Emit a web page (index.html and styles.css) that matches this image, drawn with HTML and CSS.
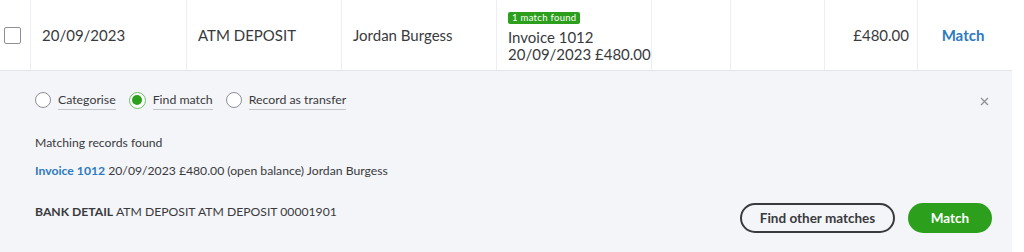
FILE: index.html
```html
<!DOCTYPE html>
<html lang="en">
<head>
<meta charset="utf-8">
<title>Bank transaction match</title>
<link rel="stylesheet" href="styles.css">
</head>
<body>
<div class="wrap">
  <div class="row">
    <div class="cell cell-check"><span class="checkbox"></span></div>
    <div class="cell">20/09/2023</div>
    <div class="cell">ATM DEPOSIT</div>
    <div class="cell">Jordan Burgess</div>
    <div class="cell cell-match">
      <span class="badge">1 match found</span>
      <div class="match-line">Invoice 1012</div>
      <div class="match-line">20/09/2023 £480.00 (open balance)</div>
    </div>
    <div class="cell"></div>
    <div class="cell"></div>
    <div class="cell cell-amount">£480.00</div>
    <div class="cell cell-action"><a class="link-match">Match</a></div>
  </div>
  <div class="panel">
    <div class="panel-top">
      <div class="radios">
        <label class="radio"><span class="radio-dot"></span><span class="radio-label">Categorise</span></label>
        <label class="radio"><span class="radio-dot selected"></span><span class="radio-label">Find match</span></label>
        <label class="radio"><span class="radio-dot"></span><span class="radio-label">Record as transfer</span></label>
      </div>
      <span class="close">
        <svg width="9" height="9" viewBox="0 0 9 9"><path d="M1 1L8 8M8 1L1 8" stroke="#8d9096" stroke-width="1.3" fill="none"/></svg>
      </span>
    </div>
    <div class="found">Matching records found</div>
    <div class="record"><a class="record-link">Invoice 1012</a> 20/09/2023 £480.00 (open balance) Jordan Burgess</div>
    <div class="bottom">
      <div class="bank"><b>BANK DETAIL</b> ATM DEPOSIT ATM DEPOSIT 00001901</div>
      <div class="actions">
        <button class="btn btn-outline">Find other matches</button>
        <button class="btn btn-green">Match</button>
      </div>
    </div>
  </div>
</div>
</body>
</html>
```

FILE: styles.css
```css
* { box-sizing: border-box; }
html, body { margin: 0; padding: 0; background: #fff; }
body { font-family: Lato, "Open Sans", sans-serif; color: #393a3d; }
.wrap { width: 1012px; }
.row {
  display: grid;
  grid-template-columns: 31px 156px 155px 155px 155px 79px 94px 93px 94px;
  height: 71px;
  border-bottom: 1px solid #e3e5e8;
}
.cell {
  border-right: 1px solid #eceef1;
  padding-left: 11px;
  display: flex;
  align-items: center;
  font-size: 15px;
  color: #393a3d;
  white-space: nowrap;
  overflow: hidden;
}
.cell:last-child { border-right: none; }
.cell-check { padding-left: 4px; }
.checkbox {
  width: 17px; height: 17px;
  border: 1px solid #8d9096;
  border-radius: 2px;
  background: #fff;
  margin-top: 1px;
}
.cell-match {
  flex-direction: column;
  align-items: flex-start;
  justify-content: flex-start;
  padding-top: 12px;
}
.badge {
  background: #2ca01c;
  color: #fff;
  font-size: 9.5px;
  line-height: 12px;
  padding: 0 4px;
  border-radius: 2px;
  letter-spacing: 0.3px;
  margin-bottom: 5px;
}
.match-line { line-height: 17px; font-size: 15px; }
.cell-amount { justify-content: flex-end; padding-right: 8px; padding-left: 0; }
.cell-action { justify-content: center; padding-left: 0; padding-right: 4px; }
.link-match { color: #2d7ac0; font-weight: 700; font-size: 15px; }
.panel {
  background: #f4f5f8;
  height: 181px;
  padding: 20px 23px 0 35px;
}
.panel-top { display: flex; justify-content: space-between; align-items: center; height: 18px; }
.radios { display: flex; align-items: center; gap: 13px; }
.radio { display: flex; align-items: center; gap: 7px; font-size: 12.3px; }
.radio-dot {
  width: 16px; height: 16px;
  border: 1px solid #8d9096;
  border-radius: 50%;
  background: #fff;
  display: flex; align-items: center; justify-content: center;
}
.radio-dot.selected { width: 17px; height: 17px; border: 1.5px solid #6cc15e; }
.radio-dot.selected::after {
  content: ""; width: 10px; height: 10px; border-radius: 50%; background: #2ca01c;
}
.radio-label { border-bottom: 1px solid #c1c4c9; line-height: 16px; padding-bottom: 1px; margin-top: 2px; }
.close { display: flex; margin-top: 2px; }
.found { font-size: 12.2px; margin-top: 26px; line-height: 16px; }
.record { font-size: 12.2px; margin-top: 12px; line-height: 16px; }
.record-link { color: #2d7ac0; font-weight: 700; }
.bottom { display: flex; justify-content: space-between; align-items: flex-start; margin-top: 24px; }
.bank { font-size: 12.2px; line-height: 16px; margin-top: 1px; }
.bank b { font-weight: 700; }
.actions { display: flex; gap: 13px; margin-right: -3px; }
.btn {
  font-family: Lato, "Open Sans", sans-serif;
  font-size: 13.5px;
  font-weight: 700;
  height: 30px;
  border-radius: 15px;
  padding: 0 12px;
  cursor: pointer;
}
.btn-outline { background: transparent; border: 2px solid #393a3d; color: #393a3d; width: 155px; }
.btn-green { background: #2ca01c; border: none; color: #fff; width: 84px; }
```
